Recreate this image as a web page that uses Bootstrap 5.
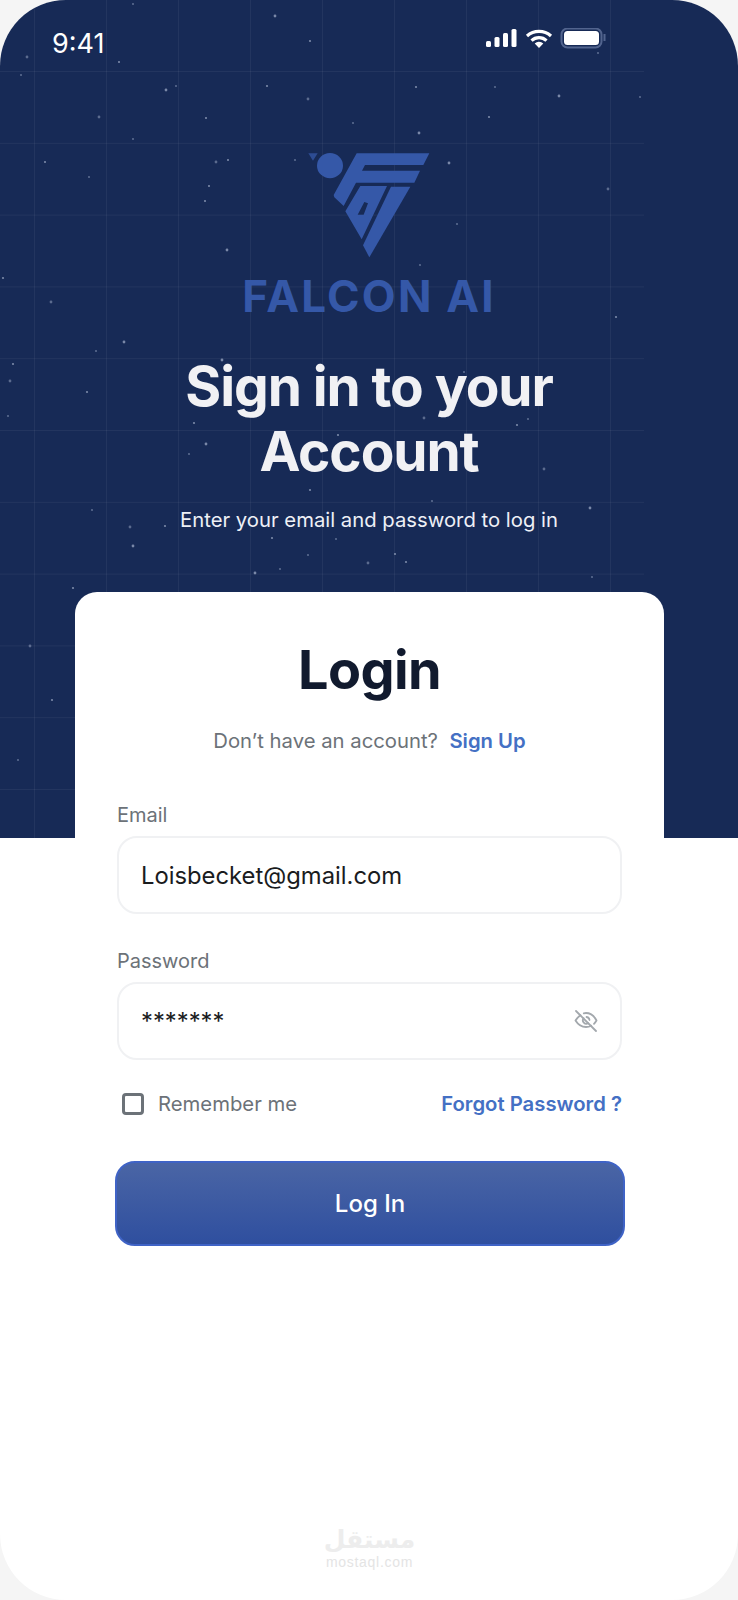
<!DOCTYPE html>
<html lang="en">
<head>
  <meta charset="UTF-8">
  <title>Falcon AI Login</title>
  <link rel="stylesheet" href="https://cdn.jsdelivr.net/npm/bootstrap@5.3.0/dist/css/bootstrap.min.css">
  <style>
    body {
      background: #f5f5f5;
      font-family: 'Inter', 'Liberation Sans', sans-serif;
    }
    .phone-screen {
      width: 738px;
      height: 1600px;
      background: #fff;
      border-radius: 66px;
      overflow: hidden;
    }
    .hero-area {
      position: relative;
      height: 838px;
      background: #172a56;
      text-align: center;
    }
    .hero-sky {
      position: absolute;
      top: 0;
      left: 0;
    }
    .hero-inner {
      position: relative;
    }
    .status-row {
      height: 70px;
      padding: 27px 0 0 52px;
      color: #fff;
      font-size: 27px;
      line-height: 34px;
      font-weight: 400;
    }
    .status-icons {
      margin-left: auto;
      margin-right: 132px;
      margin-top: 1px;
    }
    .falcon-logo {
      margin-top: 70px;
      transform: translateX(2px);
    }
    .falcon-word {
      margin-top: 10px;
      font-size: 44px;
      line-height: 52px;
      font-weight: 700;
      letter-spacing: 2.2px;
      color: #3558a8;
    }
    .hero-title {
      margin-top: 32px;
      font-size: 55px;
      line-height: 65px;
      font-weight: 700;
      letter-spacing: -1.1px;
      color: #f1f1f4;
    }
    .hero-sub {
      margin-top: 22px;
      font-size: 20.3px;
      line-height: 28px;
      color: #eef0f6;
    }
    .login-panel {
      position: relative;
      width: 589px;
      margin: -246px 0 0 75px;
      padding: 42px 42px 0;
      background: #fff;
      border-radius: 22px 22px 0 0;
    }
    .login-title {
      font-size: 54px;
      line-height: 72px;
      font-weight: 700;
      letter-spacing: -.6px;
      color: #111a2e;
      margin: 0;
    }
    .login-hint {
      margin-top: 21px;
      font-size: 20.3px;
      line-height: 28px;
      color: #6c7278;
    }
    .field-label {
      font-size: 20px;
      line-height: 28px;
      color: #6c7278;
      margin-bottom: 7px;
    }
    .field-input {
      height: 78px;
      padding: 0 22px;
      font-size: 23.8px;
      color: #1a1c1e;
      border: 2px solid #f0f1f3;
      border-radius: 20px;
      box-shadow: none;
    }
    .eye-toggle {
      position: absolute;
      top: 27px;
      right: 24px;
    }
    .remember-box {
      width: 22px;
      height: 22px;
      margin: 0 14px 0 5px;
      border: 3px solid #6c7278;
      border-radius: 4px;
      flex: none;
    }
    .remember-text {
      font-size: 20.3px;
      line-height: 28px;
      color: #6c7278;
    }
    .accent-link {
      color: #4470c4;
      font-weight: 600;
      text-decoration: none;
    }
    .field-gap-a { margin-top: 46px; }
    .field-gap-b { margin-top: 33px; }
    .field-gap-c { margin-top: 30px; }
    .field-gap-d { margin-top: 43px; }
    .login-btn {
      width: 510px;
      height: 85px;
      margin-left: -2px;
      font-size: 24px;
      font-weight: 500;
      color: #fff;
      border: 2px solid #3f63c6;
      border-radius: 20px;
      background: linear-gradient(180deg, #4a65a5 0%, #2f4f9f 100%);
    }
    .wm-block {
      margin-top: 279px;
      text-align: center;
      color: #ededed;
    }
    .wm-arabic {
      font-family: 'DejaVu Sans', sans-serif;
      font-size: 25px;
      line-height: 29px;
      font-weight: 700;
    }
    .wm-latin {
      font-family: 'Liberation Sans', sans-serif;
      font-size: 14px;
      line-height: 16px;
      letter-spacing: .7px;
      color: #e4e4e4;
    }
  </style>
</head>
<body class="m-0">
  <div class="phone-screen">
    <div class="hero-area">
      <svg class="hero-sky" width="738" height="838">
        <g id="sky-lines" stroke="#fff" stroke-opacity=".055" stroke-width="1"></g>
        <g id="sky-stars" fill="#94a0bd"></g>
      </svg>
      <div class="hero-inner">
        <div class="status-row d-flex align-items-start">
          <span>9:41</span>
          <svg class="status-icons" width="120" height="24" viewBox="0 0 120 24">
            <g fill="#fff">
              <rect x="0" y="13" width="5" height="6" rx="1.5"/>
              <rect x="8.500" y="9" width="5" height="10" rx="1.5"/>
              <rect x="17" y="5" width="5" height="14" rx="1.5"/>
              <rect x="25.500" y="1" width="5" height="18" rx="1.5"/>
            </g>
            <g fill="none" stroke="#fff" stroke-width="3.200">
              <path d="M41 8 a18 18 0 0 1 24 0"/>
              <path d="M45.500 12.600 a11 11 0 0 1 15 0"/>
            </g>
            <path d="M48.700 15.600 L53 20 L57.300 15.600 a6 6 0 0 0 -8.600 0z" fill="#fff"/>
            <rect x="75.500" y="0.500" width="40" height="19" rx="6" fill="none" stroke="#52648e" stroke-width="2"/>
            <rect x="78" y="3" width="35" height="14" rx="3.500" fill="#fff"/>
            <path d="M118.500 6 v7" stroke="#52648e" stroke-width="2"/>
          </svg>
        </div>
        <svg class="falcon-logo d-block mx-auto" width="160" height="120" viewBox="0 0 480 360">
          <g fill="#3558a8">
            <path d="M52 40h28l-14 22z" opacity=".75"/>
            <ellipse cx="117" cy="77" rx="39" ry="38"/>
            <path d="M197 40H415L397 75H222L213 92H387L370 128H195L158 198L130 172L128 165Z"/>
            <path d="M300 140H358L235 352L216 316Z"/>
            <path fill-rule="evenodd" d="M208 138H288L212 298L163 214ZM220 186L200 224L218 224L231 190Z"/>
          </g>
        </svg>
        <div class="falcon-word">FALCON AI</div>
        <h1 class="hero-title mb-0">Sign in to your<br>Account</h1>
        <p class="hero-sub mb-0">Enter your email and password to log in</p>
      </div>
    </div>
    <div class="login-panel">
      <h2 class="login-title text-center">Login</h2>
      <p class="login-hint text-center mb-0">Don’t have an account? &nbsp;<a class="accent-link" href="#">Sign Up</a></p>
      <form>
        <div class="field-gap-a">
          <label class="form-label field-label d-block" for="email">Email</label>
          <input class="form-control field-input" id="email" type="text" value="Loisbecket@gmail.com">
        </div>
        <div class="field-gap-b">
          <label class="form-label field-label d-block" for="pass">Password</label>
          <div class="position-relative">
            <input class="form-control field-input" id="pass" type="text" value="*******">
            <svg class="eye-toggle" width="24" height="24" viewBox="0 0 24 24" fill="none" stroke="#a3a8ad" stroke-width="1.800" stroke-linecap="round" stroke-linejoin="round">
              <path d="M2 2l20 20"/>
              <path d="M6.500 6.300C4.500 7.600 2.900 9.400 1.500 11.500c2.600 4.200 6 6.500 10.500 6.500 1.900 0 3.600-.4 5.200-1.300"/>
              <path d="M9.800 4.400C10.500 4.100 11.200 4 12 4c4.500 0 7.900 2.500 10.500 7.500-.8 1.300-1.600 2.400-2.500 3.300"/>
              <path d="M9.600 9.200a3.500 3.500 0 0 0 4.600 5.100"/>
              <path d="M12.500 8a3.500 3.500 0 0 1 3 3"/>
            </svg>
          </div>
        </div>
        <div class="d-flex align-items-center justify-content-between field-gap-c">
          <div class="d-flex align-items-center">
            <span class="remember-box"></span>
            <span class="remember-text">Remember me</span>
          </div>
          <a class="remember-text accent-link" href="#">Forgot Password ?</a>
        </div>
        <button class="btn login-btn d-block field-gap-d" type="button">Log In</button>
      </form>
      <div class="wm-block">
        <div class="wm-arabic" dir="rtl" lang="ar">مستقل</div>
        <div class="wm-latin">mostaql.com</div>
      </div>
    </div>
  </div>
  <script>
    const lines = document.getElementById('sky-lines');
    const stars = document.getElementById('sky-stars');
    const ns = 'http://www.w3.org/2000/svg';

    function addLine(x1, y1, x2, y2) {
      const l = document.createElementNS(ns, 'line');
      l.setAttribute('x1', x1); l.setAttribute('y1', y1);
      l.setAttribute('x2', x2); l.setAttribute('y2', y2);
      lines.appendChild(l);
    }
    for (let x = 34.5; x < 640; x += 72) addLine(x, 0, x, 838);
    for (let y = 71.5; y < 838; y += 71.8) addLine(0, y, 644, y);

    const points = [[275,16],[133,4],[310,41],[27,57],[119,62],[21,75],[166,90],[176,86],[267,86],[308,99],[416,87],[495,87],[559,96],[640,97],[489,117],[99,117],[206,118],[353,123],[419,133],[133,139],[45,162],[216,162],[228,160],[295,160],[449,163],[89,177],[209,186],[608,189],[205,201],[457,224],[227,250],[420,265],[3,278],[51,302],[616,317],[598,53],[124,342],[96,351],[13,364],[10,381],[87,392],[8,416],[222,360],[464,372],[194,423],[424,418],[517,425],[528,419],[206,444],[189,454],[338,435],[544,469],[310,490],[432,501],[590,508],[92,510],[165,526],[130,527],[272,538],[336,539],[133,546],[308,555],[395,554],[368,563],[406,562],[280,569],[255,573],[592,577],[73,588],[30,646],[52,700],[18,760]];
    points.forEach(([x, y], i) => {
      const c = document.createElementNS(ns, 'circle');
      c.setAttribute('cx', x); c.setAttribute('cy', y);
      c.setAttribute('r', i % 3 === 0 ? 1.4 : 1.1);
      c.setAttribute('opacity', i % 2 ? .55 : .8);
      stars.appendChild(c);
    });
  </script>
</body>
</html>
